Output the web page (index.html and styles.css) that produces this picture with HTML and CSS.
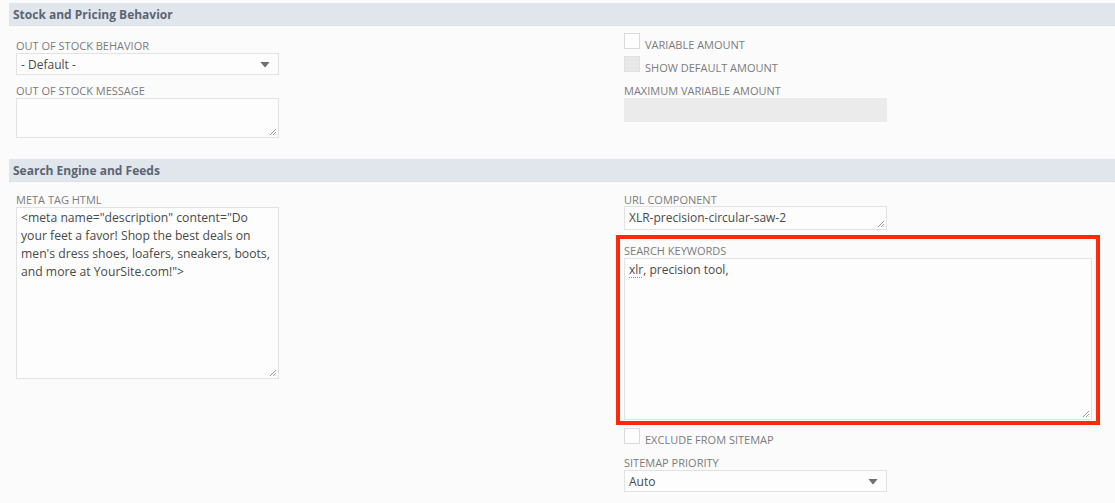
FILE: index.html
```html
<!DOCTYPE html>
<html>
<head>
<meta charset="utf-8">
<link rel="stylesheet" href="styles.css">
</head>
<body>
<div class="page">
  <div class="section-head">Stock and Pricing Behavior</div>
  <div class="grid grid-1">
    <div class="col col-left">
      <div class="field">
        <div class="label">OUT OF STOCK BEHAVIOR</div>
        <div class="select">
          <span class="select-value">- Default -</span>
          <svg class="caret" width="10" height="7" viewBox="0 0 10 7"><path d="M1 1 L9 1 Q9.6 1 9.2 1.6 L5.5 6 Q5 6.5 4.5 6 L0.8 1.6 Q0.4 1 1 1 Z" fill="#6f6f6f"/></svg>
        </div>
      </div>
      <div class="field">
        <div class="label">OUT OF STOCK MESSAGE</div>
        <div class="textarea ta-small">
          <svg class="grip" width="8" height="8" viewBox="0 0 8 8"><path d="M7 1 L1 7 M7 4 L4 7 M7 6.5 L6.5 7" stroke="#9a9a9a" stroke-width="1"/></svg>
        </div>
      </div>
    </div>
    <div class="col col-right">
      <div class="check-row">
        <span class="checkbox"></span>
        <span class="check-text">VARIABLE AMOUNT</span>
      </div>
      <div class="check-row row-2">
        <span class="checkbox checkbox-disabled"></span>
        <span class="check-text">SHOW DEFAULT AMOUNT</span>
      </div>
      <div class="field field-max">
        <div class="label">MAXIMUM VARIABLE AMOUNT</div>
        <div class="input input-disabled"></div>
      </div>
    </div>
  </div>

  <div class="section-head">Search Engine and Feeds</div>
  <div class="grid grid-2">
    <div class="col col-left">
      <div class="field">
        <div class="label">META TAG HTML</div>
        <div class="textarea ta-meta">&lt;meta name="description" content="Do<br>your feet a favor! Shop the best deals on<br>men's dress shoes, loafers, sneakers, boots,<br>and more at YourSite.com!"&gt;<svg class="grip" width="8" height="8" viewBox="0 0 8 8"><path d="M7 1 L1 7 M7 4 L4 7 M7 6.5 L6.5 7" stroke="#9a9a9a" stroke-width="1"/></svg></div>
      </div>
    </div>
    <div class="col col-right">
      <div class="field">
        <div class="label">URL COMPONENT</div>
        <div class="input input-url">XLR-precision-circular-saw-2<svg class="grip" width="8" height="8" viewBox="0 0 8 8"><path d="M7 1 L1 7 M7 4 L4 7 M7 6.5 L6.5 7" stroke="#9a9a9a" stroke-width="1"/></svg></div>
      </div>
      <div class="highlight">
        <div class="label">SEARCH KEYWORDS</div>
        <div class="textarea ta-keywords"><span class="spell">xlr</span>, precision tool,<svg class="grip" width="8" height="8" viewBox="0 0 8 8"><path d="M7 1 L1 7 M7 4 L4 7 M7 6.5 L6.5 7" stroke="#9a9a9a" stroke-width="1"/></svg></div>
      </div>
      <div class="check-row row-exclude">
        <span class="checkbox"></span>
        <span class="check-text">EXCLUDE FROM SITEMAP</span>
      </div>
      <div class="field field-priority">
        <div class="label">SITEMAP PRIORITY</div>
        <div class="select">
          <span class="select-value">Auto</span>
          <svg class="caret" width="10" height="7" viewBox="0 0 10 7"><path d="M1 1 L9 1 Q9.6 1 9.2 1.6 L5.5 6 Q5 6.5 4.5 6 L0.8 1.6 Q0.4 1 1 1 Z" fill="#6f6f6f"/></svg>
        </div>
      </div>
    </div>
  </div>
</div>
</body>
</html>
```

FILE: styles.css
```css
html, body {
  margin: 0;
  padding: 0;
  background: #fbfbfb;
}

body {
  font-family: "Open Sans", "Liberation Sans", sans-serif;
  color: #4a4a4a;
  width: 1115px;
  height: 503px;
  overflow: hidden;
}

.page {
  padding-top: 3px;
}

.section-head {
  margin-left: 9px;
  height: 23px;
  line-height: 23px;
  padding-left: 4px;
  background: #e1e6ed;
  border-bottom: 1px dotted #d7dde5;
  box-sizing: border-box;
  font-size: 12px;
  font-weight: 700;
  color: #5b6573;
}

.grid {
  display: grid;
  grid-template-columns: 608px 1fr;
  padding-left: 16px;
  padding-top: 7px;
}

.grid-1 {
  height: 126px;
  box-sizing: border-box;
  margin-bottom: 7px;
}

.grid-2 {
  padding-top: 10px;
}

.col-left {
  padding-top: 5px;
}

.grid-2 .col-left {
  padding-top: 0;
}

.field + .field {
  margin-top: 8px;
}

.label {
  font-size: 11px;
  line-height: 15px;
  height: 15px;
  color: #7b7b7b;
  white-space: nowrap;
}

.select {
  width: 263px;
  height: 22px;
  box-sizing: border-box;
  border: 1px solid #e2e2e2;
  background: #fdfdfd;
  display: flex;
  align-items: center;
  justify-content: space-between;
  padding: 0 8px 0 4px;
}

.select-value {
  font-size: 12px;
  color: #4a4a4a;
}

.caret {
  display: block;
}

.textarea {
  position: relative;
  width: 263px;
  box-sizing: border-box;
  border: 1px solid #e2e2e2;
  background: #fdfdfd;
  font-size: 12px;
  line-height: 18px;
  color: #4a4a4a;
  padding: 1px 4px;
}

.ta-small {
  height: 40px;
}

.ta-meta {
  height: 172px;
  font-size: 12.2px;
  white-space: nowrap;
}

.ta-keywords {
  width: 468px;
  height: 162px;
  padding-top: 2px;
}

.grip {
  position: absolute;
  right: 1px;
  bottom: 1px;
}

.spell {
  text-decoration: underline dotted #9a9a9a;
  text-underline-offset: 3px;
}

.input {
  position: relative;
  width: 263px;
  height: 24px;
  box-sizing: border-box;
  border: 1px solid #e2e2e2;
  background: #fdfdfd;
  font-size: 12px;
  line-height: 22px;
  padding: 0 4px;
  color: #4a4a4a;
}

.input-disabled {
  background: #ebebeb;
  border-color: #ebebeb;
}

.input-url {
  margin-top: -1px;
}

.check-row {
  display: flex;
  align-items: flex-start;
  height: 19px;
}

.row-2 {
  margin-top: 4px;
}

.checkbox {
  width: 16px;
  height: 16px;
  box-sizing: border-box;
  border: 1px solid #dadada;
  background: #fdfdfd;
  flex: none;
}

.checkbox-disabled {
  background: #e8e8e8;
  border-color: #e0e0e0;
}

.check-text {
  margin-left: 5px;
  margin-top: 5px;
  font-size: 11px;
  line-height: 14px;
  color: #7b7b7b;
  white-space: nowrap;
}

.field-max {
  margin-top: 8px;
}

.highlight {
  margin-top: 5px;
  margin-left: -8px;
  width: 484px;
  height: 190px;
  box-sizing: border-box;
  border: 4px solid #ff2a0a;
  padding: 4px 4px 2px 4px;
}

.row-exclude {
  margin-top: 3px;
}

.field-priority {
  margin-top: 8px;
}
```
